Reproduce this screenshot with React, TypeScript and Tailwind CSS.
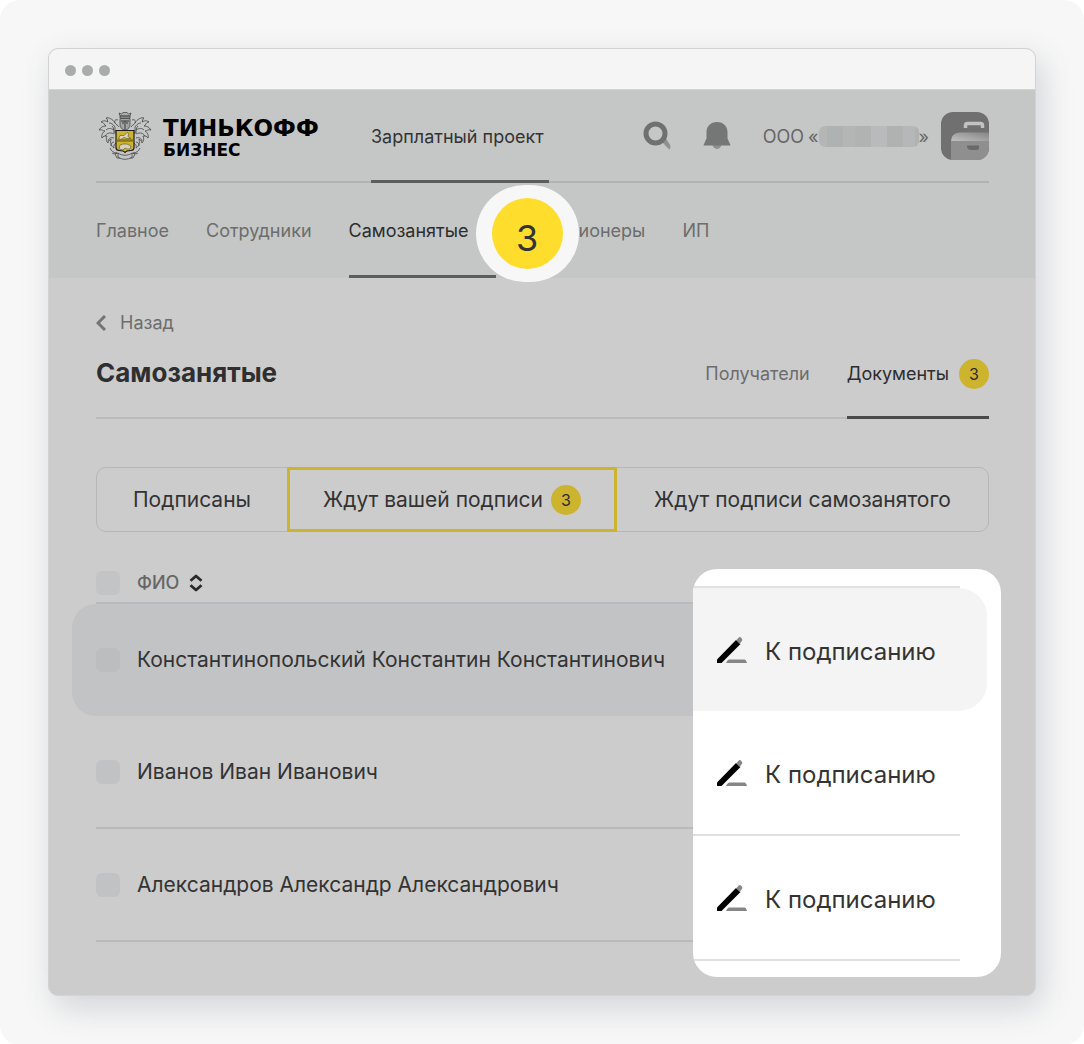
import { useState } from 'react'

const PEOPLE = [
  { id: 1, name: 'Константинопольский Константин Константинович' },
  { id: 2, name: 'Иванов Иван Иванович' },
  { id: 3, name: 'Александров Александр Александрович' },
]

function Leaves() {
  return (
    <g>
      <path d="M20 8c-3-1-4 1-3 3 1 2 3 2 4 4" />
      <path d="M17 11c-2-4-7-6-9-5 2 1 1 3 2 4-3-2-6-1-7 0 3 0 3 3 5 4-3 0-5 1-7 4 3-1 4 1 6 1-2 1-4 4-3 7 1-2 3-2 5-2-1 2-1 5 1 7 0-2 2-3 3-4-1 4 0 7 3 9-1-3 1-4 2-5" />
      <path d="M17 15c-2-3-4-4-6-4M16 18c-3-2-6-2-8 0M16 22c-4-2-7-1-9 2M16 26c-3-1-5 0-6 3M16 30c-2 0-3 2-3 4" />
      <path d="M12 36c1 3 4 5 7 5-2 1-4 1-5 0M17 15v7M14 14c2 2 2 4 2 7" />
    </g>
  )
}

function Emblem() {
  return (
    <svg viewBox="0 0 54 48" className="h-12 w-[54px] shrink-0" fill="none" stroke="#444" strokeWidth="0.8" aria-hidden="true">
      <Leaves />
      <g transform="translate(54 0) scale(-1 1)">
        <Leaves />
      </g>
      <path d="M22 4l-1-3 2.500 1L25 .6l2-.3 2 .3 1.500 1.400L33 1l-1 3zM22 4h10v2H22z" fill="#aeb0af" />
      <path d="M22 6.500h10v6c0 3-2 5-5 6-3-1-5-3-5-6z" fill="#a2a4a3" />
      <path d="M23 9h8M27 9v9M24 11h2M28 11h2" stroke="#222" />
      <path d="M18 18.500h18v17c0 2-1 3-3 3-3 0-5 .5-6 2-1-1.500-3-2-6-2-2 0-3-1-3-3z" fill="#cdb42e" stroke="#1c1c1c" strokeWidth="1.200" />
      <path d="M18.500 28.500h17" stroke="#8a7717" strokeWidth="2.500" />
      <path d="M20.500 26.500l1.500-3h4l3-3 2 1-1 3 3 2h-4l-3-1-3 2zM21 37l1-4 3-1h4l4 2-1 3h-3l-2-1-2 2z" fill="#d5d2c4" stroke="#6b6020" strokeWidth="0.700" />
      <path d="M20 41l-3 1 2 4h3M34 41l3 1-2 4h-3M20 41c4 3 10 3 14 0v4c-4 3-10 3-14 0z" fill="#c5c7c6" />
    </svg>
  )
}

function SearchIcon() {
  return (
    <svg viewBox="0 0 28 30" className="h-[30px] w-7" fill="none" aria-hidden="true">
      <path d="M19 21l4-3.500 3.800 6c1 1.600.6 3.500-.3 5.200z" fill="#8f9190" />
      <circle cx="12.500" cy="12.500" r="9.500" stroke="#6f706f" strokeWidth="5" />
    </svg>
  )
}

function BellIcon() {
  return (
    <svg viewBox="0 0 28 28" className="h-7 w-7" aria-hidden="true">
      <path d="M9.500 22h9a4.500 5 0 0 1-9 0z" fill="#8f9190" />
      <path d="M14 0C7.500 0 3.500 4.500 3.500 10v6.500L.6 23q-.2.500.4.500h26q.6 0 .4-.5l-2.900-6.500V10C24.500 4.500 20.500 0 14 0z" fill="#757676" />
    </svg>
  )
}

function CompanyIcon() {
  return (
    <svg viewBox="0 0 48 48" className="size-12" aria-hidden="true">
      <defs>
        <linearGradient id="lid" x1="0" y1="1" x2="1" y2="0">
          <stop offset="0" stopColor="#c0c0c0" />
          <stop offset="1" stopColor="#858585" />
        </linearGradient>
        <clipPath id="tile">
          <rect width="48" height="48" rx="12" />
        </clipPath>
      </defs>
      <g clipPath="url(#tile)">
        <rect width="48" height="48" fill="#707070" />
        <path d="M24.500 16v-2.500q0-2 2-2h13q2 0 2 2V16" fill="none" stroke="#c2c2c2" strokeWidth="3.500" />
        <path d="M10 48V29h38v19z" fill="#8f8f8f" />
        <path d="M10 29q0-8 9-8.500h29V29z" fill="url(#lid)" />
        <path d="M26 33.500h12v2q0 2.500-2.500 2.500h-5q-4.500 0-4.500-4.500z" fill="#6a6a6a" />
      </g>
    </svg>
  )
}

function PenIcon() {
  return (
    <svg viewBox="0 0 30 28" className="h-7 w-[30px]" aria-hidden="true">
      <path d="M12.500 23.500h15q1.500 0 2.500 3.500H9q1.500-3.500 3.500-3.500z" fill="#868686" />
      <path d="M0 27v-3.500L19 4l4.500 4L5 26.500Q4.500 27 4 27z" fill="#000" />
      <path d="M19.500 4l2.500-2.700q1-.7 2 .2l1 1.500q.8 1-.2 2L22.500 8z" fill="#868686" />
    </svg>
  )
}

function Count({ value }: { value: number }) {
  return (
    <span className="flex size-[30px] shrink-0 items-center justify-center rounded-full bg-[#cdb42e] text-base text-[#2d2d2d]">
      {value}
    </span>
  )
}

function Checkbox({ label, className }: { label: string; className: string }) {
  return (
    <input
      type="checkbox"
      aria-label={label}
      className={`block size-6 appearance-none rounded-md checked:bg-[#8d8f90] ${className}`}
    />
  )
}

export default function App() {
  const [filter, setFilter] = useState('yours')

  return (
    <div className="min-h-screen bg-white font-['Inter',sans-serif] text-[#333]">
      <div className="min-h-screen rounded-[20px] bg-[#f7f7f7] px-12 pt-12 pb-[49px]">
        <div className="relative rounded-[10px] border border-[#d2d4d4] bg-[#ccc] pb-[53px] shadow-[6px_12px_32px_rgba(60,75,95,0.2)]">
          {/* Title bar */}
          <div className="flex h-[41px] items-center gap-1.5 rounded-t-[9px] border-b border-[#d2d4d4] bg-[#f5f5f5] px-4 pt-0.5">
            <span className="size-[11px] rounded-full bg-[#aaacab]" />
            <span className="size-[11px] rounded-full bg-[#aaacab]" />
            <span className="size-[11px] rounded-full bg-[#aaacab]" />
          </div>

          {/* Header */}
          <header className="bg-[#c5c7c6] pr-[46px] pl-[47px]">
            <div className="flex h-[93px] items-center border-b-2 border-[#b1b3b2]">
              <a href="#" className="flex w-[275px] shrink-0 items-center gap-[11px] pl-0.5 font-['DejaVu_Sans',sans-serif] font-bold text-black">
                <Emblem />
                <span className="pt-1">
                  <span className="block text-[23px] leading-6">ТИНЬКОФФ</span>
                  <span className="block text-[17px] leading-5">БИЗНЕС</span>
                </span>
              </a>
              <a href="#" className="-mb-0.5 flex h-[93px] w-[178px] items-center border-b-[3px] border-[#5c5d5d] pt-[3px] text-lg whitespace-nowrap">
                Зарплатный проект
              </a>
              <div className="ml-auto flex items-center">
                <button aria-label="Поиск" className="mr-8">
                  <SearchIcon />
                </button>
                <button aria-label="Уведомления" className="mr-8">
                  <BellIcon />
                </button>
                <span className="flex items-center pt-0.5 text-lg text-[#666]">
                  <span className="mr-1">ООО</span>«
                  <span className="flex h-[21px] w-[100px] overflow-hidden rounded-md">
                    <span className="w-2 bg-[#b4b6b6]" />
                    <span className="w-4 bg-[#afb2b2]" />
                    <span className="w-3 bg-[#b4b6b6]" />
                    <span className="w-4 bg-[#b1b3b3]" />
                    <span className="w-4 bg-[#b9babc]" />
                    <span className="w-4 bg-[#b0b2b2]" />
                    <span className="w-3 bg-[#b6b7b8]" />
                    <span className="flex-1 bg-[#b0b2b2]" />
                  </span>
                  »
                </span>
                <button aria-label="Компания" className="ml-3">
                  <CompanyIcon />
                </button>
              </div>
            </div>

            <nav className="flex h-[95px] gap-[37px] text-lg text-[#6c6d6d]">
              <a href="#" className="flex items-center">Главное</a>
              <a href="#" className="flex items-center">Сотрудники</a>
              <a href="#" className="relative flex items-center border-b-[3px] border-[#5c5d5d] pt-[3px] pr-[27px] text-[#2d2d2d]">
                Самозанятые
                <span className="absolute top-0.5 -right-[83px] flex h-[97px] w-[103px] items-center justify-center rounded-[50px] bg-[#f7f7f7]">
                  <span className="flex size-[71px] items-center justify-center rounded-full bg-[#ffdd2d] pt-2 text-4xl text-[#333]">3</span>
                </span>
              </a>
              {/* the step badge covers the first letters */}
              <a href="#" aria-label="Пенсионеры" className="flex items-center pl-[46px]">ионеры</a>
              <a href="#" className="flex items-center">ИП</a>
            </nav>
          </header>

          <main className="pt-[33px] pr-[46px] pl-[47px]">
            <a href="#" className="inline-flex items-center gap-3.5 text-lg leading-6 text-[#6c6d6d]">
              <svg viewBox="0 0 10 16" className="h-4 w-2.5" fill="none" stroke="#747474" strokeWidth="3" aria-hidden="true">
                <path d="M9 1L2 8l7 7" />
              </svg>
              Назад
            </a>

            <div className="flex h-[82px] items-start justify-between border-b-2 border-[#bbb]">
              <h1 className="pt-4 text-[26px] leading-10 font-bold text-[#2f2f2f]">Самозанятые</h1>
              <div className="flex gap-[37px] text-lg text-[#6c6d6d]">
                <a href="#" className="flex h-[82px] items-center border-b-[3px] border-transparent pb-1.5">Получатели</a>
                <a href="#" className="flex h-[82px] items-center gap-2.5 border-b-[3px] border-[#4a4a4a] pb-1.5 text-[#2d2d2d]">
                  Документы <Count value={3} />
                </a>
              </div>
            </div>

            {/* Document filter */}
            <div className="mt-12 flex h-[65px] rounded-[10px] border border-[#b5b7b8] text-[21px]">
              <button onClick={() => setFilter('signed')} className="px-9">
                Подписаны
              </button>
              <button
                onClick={() => setFilter('yours')}
                aria-pressed={filter === 'yours'}
                className="-my-px flex items-center gap-2 border-[3px] border-[#cdb42e] px-[33px]"
              >
                Ждут вашей подписи <Count value={3} />
              </button>
              <button onClick={() => setFilter('theirs')} className="flex-1">
                Ждут подписи самозанятого
              </button>
            </div>

            <table className="mt-8 -ml-6 w-full border-separate border-spacing-0 text-left text-[21px]">
              <thead>
                <tr className="h-10">
                  <th className="w-6" />
                  <th className="w-[41px] border-b-2 border-[#b8babb]">
                    <Checkbox label="Выбрать всех" className="bg-[#c2c4c6]" />
                  </th>
                  <th className="border-b-2 border-[#b8babb] text-lg font-medium text-[#666]">
                    <button className="flex items-center gap-2.5">
                      ФИО
                      <svg viewBox="0 0 14 18" className="h-[18px] w-3.5" fill="none" stroke="#2a2a2a" strokeWidth="2.800" strokeLinejoin="round" aria-hidden="true">
                        <path d="M1.500 6.800L7 2l5.500 4.800M1.500 11.200L7 16l5.500-4.800" />
                      </svg>
                    </button>
                  </th>
                </tr>
              </thead>
              <tbody>
                {PEOPLE.map((p, i) =>
                  i === 0 ? (
                    <tr key={p.id} className="h-28">
                      <td className="rounded-l-3xl bg-[#c2c3c5]" />
                      <td className="bg-[#c2c3c5]"><Checkbox label={p.name} className="bg-[#bbbdbe]" /></td>
                      <td className="bg-[#c2c3c5]">{p.name}</td>
                    </tr>
                  ) : (
                    <tr key={p.id} className="h-[113px]">
                      <td />
                      <td className="border-b-2 border-[#b8babb]"><Checkbox label={p.name} className="bg-[#c0c2c4]" /></td>
                      <td className="border-b-2 border-[#b8babb]">{p.name}</td>
                    </tr>
                  )
                )}
              </tbody>
            </table>
          </main>

          {/* Highlighted actions */}
          <div className="absolute right-[34px] bottom-[18px] w-[308px] overflow-hidden rounded-3xl bg-white pt-[17px] pb-4 text-2xl">
            <div className="mr-[41px] border-b-2 border-[#e0e0e0]" />
            {PEOPLE.map((p, i) => (
              <div key={p.id} className={i === 0 ? 'mr-3.5 rounded-r-[28px] bg-[#f4f4f4]' : 'mr-[41px] border-b-2 border-[#e0e0e0]'}>
                <button className="flex h-[123px] items-center gap-[18px] pl-6">
                  <PenIcon />
                  <span className="pt-1">К подписанию</span>
                </button>
              </div>
            ))}
          </div>
        </div>
      </div>
    </div>
  )
}
